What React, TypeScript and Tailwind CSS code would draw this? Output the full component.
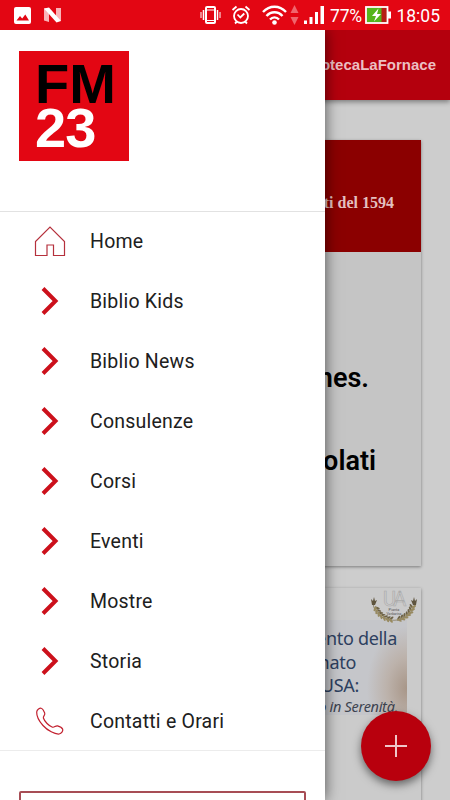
import React from "react";

const menuItems = [
  { label: "Home", icon: "home" },
  { label: "Biblio Kids", icon: "arrow" },
  { label: "Biblio News", icon: "arrow" },
  { label: "Consulenze", icon: "arrow" },
  { label: "Corsi", icon: "arrow" },
  { label: "Eventi", icon: "arrow" },
  { label: "Mostre", icon: "arrow" },
  { label: "Storia", icon: "arrow" },
  { label: "Contatti e Orari", icon: "phone" },
];

const MenuIcon: React.FC<{ name: string }> = ({ name }) => {
  if (name === "home") {
    return (
      <svg width="32" height="32" viewBox="0 0 32 32" fill="none" stroke="#b5303c" strokeWidth="1.2">
        <path d="M1.500 29.500V15.500L16 1l14.500 14.500v14H19.500V19h-6.500v10.500z" />
      </svg>
    );
  }
  if (name === "phone") {
    return (
      <svg width="32" height="32" viewBox="0 0 32 32" fill="none" stroke="#c2202e" strokeWidth="1.2">
        <path d="M4.500 3C6.500 1.700 8 2 9.200 4L10.700 7C11.500 9 9 10 9.400 12C10.500 15.500 15 20 18.500 21.200C20.500 21.700 21.300 19.500 23.500 19.800C25.500 20.300 28 21.500 28.700 23.200C29.200 25.200 27.500 27.500 25.200 28C21 28.500 13.500 24.500 9 19.500C5 15 2.500 10 2.700 6C2.800 4.700 3.500 3.700 4.500 3z" />
      </svg>
    );
  }
  return (
    <svg width="32" height="32" viewBox="0 0 32 32" fill="none" stroke="#cc101b" strokeWidth="4">
      <path d="M9 2.500l12.500 12.500L9 27.500" />
    </svg>
  );
};

const StatusBar = () => (
  <div className="flex h-[30px] items-center bg-[#e30613] pr-[10px] pl-[14px] text-white">
    <svg width="17" height="17" viewBox="0 0 17 17">
      <rect width="17" height="17" rx="2" fill="#fff" />
      <path d="M2.500 13.500l3.500-4.500 2.200 2.500L11.300 7.500l3.700 6z" fill="#e30613" />
    </svg>
    <svg className="ml-[12px]" width="19" height="16" viewBox="0 0 19 16">
      <path d="M1 1.500h5v13.500l-5-1.500zM13 1h5v13l-5-1.500z" fill="#f9b4b8" />
      <path d="M1 1.500L6 .5l12 13.500-4.500 1.500z" fill="#fff" />
    </svg>

    <svg className="ml-[138px]" width="21" height="20" viewBox="0 0 21 20" fill="none" stroke="#fff">
      <path d="M1 7v6M20 7v6" strokeWidth="1" />
      <path d="M3.500 5v10M17.500 5v10" strokeWidth="1.5" />
      <rect x="6" y="2" width="9" height="16" rx="1" strokeWidth="2" />
      <path d="M6 5h9M6 15.500h9" strokeWidth="1" />
    </svg>
    <svg className="ml-[10px]" width="20" height="20" viewBox="0 0 20 20" fill="none" stroke="#fff" strokeWidth="1.8">
      <circle cx="10" cy="11" r="7" />
      <path d="M1.500 5l4-3.500M18.500 5l-4-3.500M4 18.500l2-2M16 18.500l-2-2M6.500 9.500l2.800 3 4-4" />
    </svg>
    <svg className="ml-[11px]" width="25" height="20" viewBox="0 0 25 20" fill="none" stroke="#fff" strokeWidth="2.4">
      <path d="M1 7c6.500-7 16.500-7 23 0M4.500 11c4.500-5 11.500-5 16 0M8 14.500c2.500-2.800 6.500-2.800 9 0" />
      <circle cx="12.500" cy="17.500" r="2.300" fill="#fff" stroke="none" />
    </svg>
    <svg className="ml-[3px]" width="9" height="20" viewBox="0 0 9 20" fill="#f0656d">
      <path d="M4.500 0l4 8h-8zM4.500 20l4-8h-8z" />
    </svg>
    <svg className="ml-[5px]" width="20" height="18" viewBox="0 0 20 18" fill="#fff">
      <path d="M0 14.500h3V18H0zM5.500 11h3v7h-3zM11 6h3v12h-3zM16.500 0H20v18h-3.500z" />
    </svg>
    <span className="ml-[6px] w-[33px] pt-[2px] text-[17.5px] tracking-[-0.2px] whitespace-nowrap">77%</span>
    <svg className="ml-[2px]" width="26" height="18" viewBox="0 0 26 18">
      <rect x="1" y="1" width="21.500" height="16" fill="#b61e14" stroke="#fff" strokeWidth="1.8" />
      <path d="M2 2h14.500v14H2z" fill="#55b51b" />
      <path d="M23 5.500h3v7h-3z" fill="#fff" />
      <path d="M13.500 2.500L7 10h4l-2 5.500 7-7.500h-4z" fill="#fff" />
    </svg>
    <span className="ml-auto pt-[2px] text-[17.5px] whitespace-nowrap">18:05</span>
  </div>
);

const leaves = [-72, -62, -52, -42, -32, -22, -12, 12, 22, 32, 42, 52, 62, 72];

const Laurel = () => (
  <svg width="50" height="37" viewBox="0 0 50 37" fill="none">
    <text x="24.500" y="18" textAnchor="middle" fontSize="20" letterSpacing="-2.5" fill="none" stroke="#a9a9a9" strokeWidth=".6" fontFamily="Roboto">UA</text>
    <path d="M4 15C6 38 44 38 46 15" stroke="#857a5c" strokeWidth=".8" />
    {leaves.map((angle) => (
      <g key={angle} transform={`translate(25 14) scale(1.08 1) rotate(${angle}) translate(0 18.500)`}>
        <ellipse cx="-.5" cy="-2" rx="1" ry="2.600" transform="rotate(40)" fill="#6d6246" />
        <ellipse cx=".5" cy="1" rx="1.100" ry="2.600" transform="rotate(-50)" fill="#988a60" />
      </g>
    ))}
    <path d="M2 11l2 2 1-4 1 4 2-1-2 5H3zM42 12l2 1 1-4 1 4 2-2-1 6h-3z" fill="#5e543e" />
    <text x="25" y="22.500" textAnchor="middle" fontSize="3.8" fill="#555" fontFamily="Roboto">Pianta</text>
    <text x="25" y="27" textAnchor="middle" fontSize="3.3" fill="#555" fontFamily="Roboto">Vanbarina</text>
  </svg>
);

const Page = () => (
  <div className="flex h-full flex-col bg-[#cdcdcd]">
    <header className="z-10 flex h-[70px] shrink-0 items-center justify-end bg-[#b4000d] pr-[14px] shadow-[0_2px_5px_rgba(0,0,0,0.4)]">
      <h1 className="font-['Liberation_Sans',sans-serif] text-[15px] font-bold text-[#ecbfc2]">otecaLaFornace</h1>
    </header>
    <main className="flex flex-col gap-[22px] pt-[40px] pr-[29px] pl-[29px]">
      <article className="h-[426px] shrink-0 bg-[#c5c5c5] text-right shadow-[0_1px_3px_rgba(0,0,0,0.4)]">
        <div className="flex h-[112px] items-center justify-end bg-[#8b0000] pt-[13px] pr-[27px]">
          <p className="font-['Liberation_Serif',serif] text-[16px] font-bold text-[#e3bfbf]">ti del 1594</p>
        </div>
        <p className="mt-[109px] pr-[52px] text-[27px] leading-[34px] font-semibold">nes.</p>
        <p className="mt-[49px] pr-[45px] text-[27px] leading-[34px] font-semibold">olati</p>
      </article>
      <article className="h-[250px] shrink-0 bg-[#cbcbcb] shadow-[0_1px_3px_rgba(0,0,0,0.4)]">
        <div className="flex h-[32px] justify-end pr-[2px]">
          <Laurel />
        </div>
        <div className="mr-[14px] h-[95px] bg-[radial-gradient(ellipse_40px_62px_at_100%_72%,#a89688_0%,#bcb2ab_50%,#c5c6ca_100%)] pt-[7px] text-right font-['Noto_Sans',sans-serif] text-[18px] leading-[23.5px] tracking-[-0.3px] text-[#2d405f]">
          <p className="pr-[10px]">ento della</p>
          <p className="pr-[51px]">nato</p>
          <p className="pr-[48px]">USA:</p>
          <p className="pr-[9px] text-[14.5px] leading-[17px] tracking-[-0.3px] text-[#3d4350] italic">o in Serenità,</p>
        </div>
      </article>
    </main>
  </div>
);

const Drawer = () => (
  <aside className="absolute inset-y-0 left-0 z-20 w-[325px] overflow-hidden bg-white shadow-[0_0_14px_rgba(0,0,0,0.6)]">
    <div className="h-[182px] border-b border-[#e2e2e2] pt-[21px] pl-[19px]">
      <div className="h-[110px] w-[110px] bg-[#e30613] pt-[11px] pl-[16px] font-['Liberation_Sans',sans-serif] text-[56px] leading-[44px] font-bold">
        <p className="text-black">FM</p>
        <p className="tracking-[-1px] text-white">23</p>
      </div>
    </div>
    <nav className="h-[539px] border-b border-[#ececec]">
      {menuItems.map((item) => (
        <a key={item.label} className="flex h-[60px] items-center pl-[34px]">
          <MenuIcon name={item.icon} />
          <span className="ml-[24px] text-[19.5px] tracking-[0.22px] text-[#202020]">{item.label}</span>
        </a>
      ))}
    </nav>
    <div className="mt-[40px] ml-[19px] h-[60px] w-[287px] rounded-[2px] border-2 border-[#a74d55]" />
  </aside>
);

const App: React.FC = () => {
  return (
    <div className="flex h-[800px] w-[450px] flex-col overflow-hidden font-[Roboto,sans-serif]">
      <StatusBar />
      <div className="relative min-h-0 flex-1 overflow-hidden">
        <Page />
        <Drawer />
        <button
          aria-label="Aggiungi"
          className="absolute right-[19px] bottom-[19px] z-10 flex h-[70px] w-[70px] items-center justify-center rounded-full bg-[#b8000d] shadow-[0_4px_9px_rgba(0,0,0,0.5)]"
        >
          <svg width="22" height="22" viewBox="0 0 22 22" stroke="#efc6c9" strokeWidth="2">
            <path d="M11 0v22M0 11h22" />
          </svg>
        </button>
      </div>
    </div>
  );
};

export default App;
